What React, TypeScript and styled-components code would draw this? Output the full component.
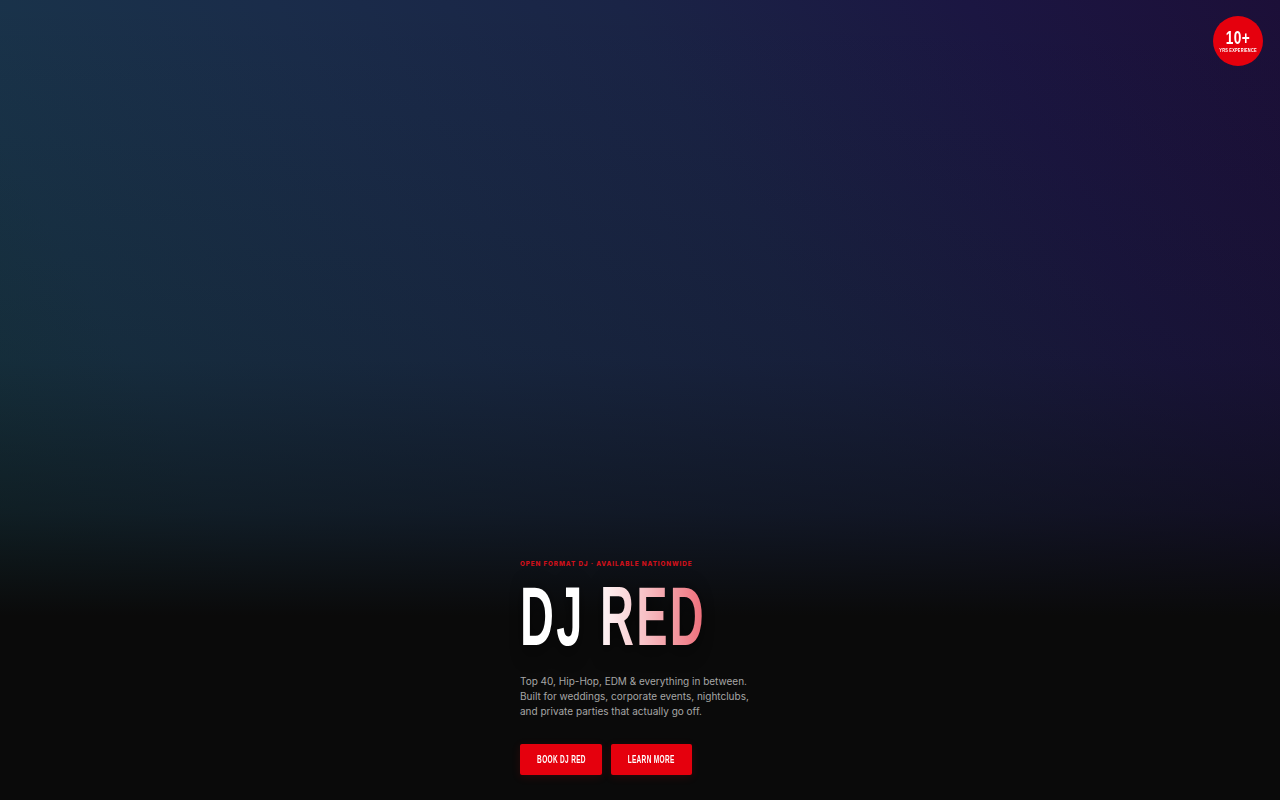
import styled, { createGlobalStyle } from 'styled-components'

const GlobalStyle = createGlobalStyle`
  html, body {
    margin: 0;
    padding: 0;
    background: #0a0a0a;
  }
  * {
    box-sizing: border-box;
  }
`;

const Hero = styled.section`
  position: relative;
  min-height: 100vh;
  display: flex;
  flex-direction: column;
  justify-content: flex-end;
  align-items: center;
  padding-bottom: 25px;
  overflow: hidden;
  background:
    linear-gradient(180deg, rgba(10, 10, 10, 0) 0%, rgba(10, 10, 10, 0.2) 45%, rgba(10, 10, 10, 0.55) 64%, #0a0a0a 77%),
    linear-gradient(60deg, #153a40 0%, #19344a 22%, #1a2c4a 42%, #1a2446 62%, #1b1642 82%, #1c0f38 100%);
`;

const Content = styled.div`
  width: 240px;
  display: flex;
  flex-direction: column;
  align-items: flex-start;
`;

const Eyebrow = styled.div`
  font-family: Inter, 'Liberation Sans', sans-serif;
  font-weight: 800;
  font-size: 6.3px;
  letter-spacing: 0.9px;
  color: #d0101a;
  text-transform: uppercase;
  white-space: nowrap;
  line-height: 8px;
`;

// condensed display type: no narrow family installed, so squeeze Liberation Sans
const Title = styled.h1`
  margin: 17px 0 0;
  font-family: 'Liberation Sans', sans-serif;
  font-weight: 700;
  font-size: 84px;
  line-height: 62px;
  letter-spacing: 4px;
  white-space: nowrap;
  transform: scaleX(0.56);
  transform-origin: left center;
  background: linear-gradient(90deg, #ffffff 0%, #ffffff 38%, #f9d3d6 60%, #ee6b77 100%);
  -webkit-background-clip: text;
  background-clip: text;
  color: transparent;
  filter: drop-shadow(0 4px 10px rgba(0, 0, 0, 0.6));
`;

const Lead = styled.p`
  margin: 27px 0 0;
  font-family: Inter, 'Liberation Sans', sans-serif;
  font-size: 10px;
  line-height: 15px;
  color: #a6a6a6;
  white-space: nowrap;
`;

const Actions = styled.div`
  display: flex;
  gap: 9px;
  margin-top: 25px;
`;

const Button = styled.a<{ $w: number }>`
  display: inline-flex;
  align-items: center;
  justify-content: center;
  width: ${p => p.$w}px;
  height: 31px;
  background: #e5000d;
  border-radius: 2px;
  color: #fff;
  text-decoration: none;
  box-shadow: 0 2px 8px rgba(229, 0, 13, 0.15);
`;

const Condensed = styled.span<{ $size: number; $scale: number }>`
  display: inline-block;
  font-family: 'Liberation Sans', sans-serif;
  font-weight: 700;
  font-size: ${p => p.$size}px;
  letter-spacing: 0.5px;
  white-space: nowrap;
  text-transform: uppercase;
  transform: scaleX(${p => p.$scale});
`;

const Badge = styled.div`
  position: absolute;
  top: 16px;
  right: 17px;
  width: 50px;
  height: 50px;
  border-radius: 50%;
  background: #e5000d;
  display: flex;
  flex-direction: column;
  align-items: center;
  justify-content: center;
  color: #fff;
  line-height: 1;
`;

const BadgeNumber = styled(Condensed)`
  margin-top: 1px;
  line-height: 16px;
`;

const BadgeLabel = styled(Condensed)`
  letter-spacing: 0.3px;
  line-height: 8px;
`;

export default function App() {
  return (
    <>
      <GlobalStyle />
      <Hero>
        <Badge>
          <BadgeNumber $size={18} $scale={0.76}>10+</BadgeNumber>
          <BadgeLabel $size={5} $scale={0.78}>Yrs Experience</BadgeLabel>
        </Badge>
        <Content>
          <Eyebrow>Open Format DJ · Available Nationwide</Eyebrow>
          <Title>DJ RED</Title>
          <Lead>
            Top 40, Hip-Hop, EDM &amp; everything in between.
            <br />
            Built for weddings, corporate events, nightclubs,
            <br />
            and private parties that actually go off.
          </Lead>
          <Actions>
            <Button href="#" $w={82}>
              <Condensed $size={10} $scale={0.65}>Book DJ Red</Condensed>
            </Button>
            <Button href="#" $w={81}>
              <Condensed $size={10} $scale={0.65}>Learn More</Condensed>
            </Button>
          </Actions>
        </Content>
      </Hero>
    </>
  )
}
